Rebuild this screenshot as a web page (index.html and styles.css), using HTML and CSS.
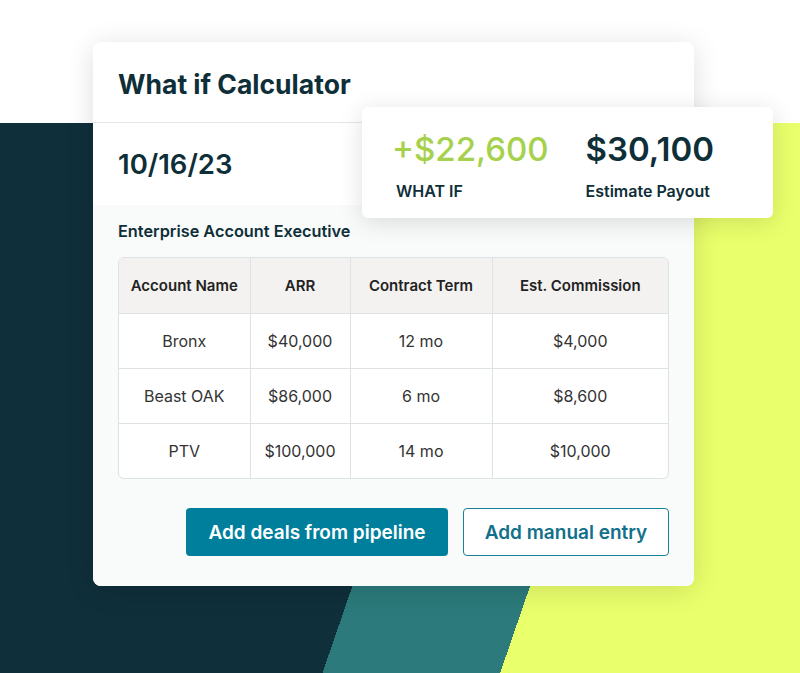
FILE: index.html
```html
<!DOCTYPE html>
<html lang="en">
<head>
    <meta charset="UTF-8">
    <meta name="viewport" content="width=device-width, initial-scale=1.0">
    <title>What if Calculator</title>
    <link rel="stylesheet" href="styles.css">
</head>
<body>

    <div class="scene">
        <div class="card">
            <div class="card-head">What if Calculator</div>
            <div class="card-date">10/16/23</div>
            <div class="card-body">
                <div class="role">Enterprise Account Executive</div>
                <div class="table-wrap">
                    <table class="deals">
                        <thead>
                            <tr>
                                <th class="c-name">Account Name</th>
                                <th class="c-arr">ARR</th>
                                <th class="c-term">Contract Term</th>
                                <th class="c-comm">Est. Commission</th>
                            </tr>
                        </thead>
                        <tbody>
                            <tr><td>Bronx</td><td>$40,000</td><td>12 mo</td><td>$4,000</td></tr>
                            <tr><td>Beast OAK</td><td>$86,000</td><td>6 mo</td><td>$8,600</td></tr>
                            <tr><td>PTV</td><td>$100,000</td><td>14 mo</td><td>$10,000</td></tr>
                        </tbody>
                    </table>
                </div>
                <div class="actions">
                    <button class="btn btn-fill">Add deals from pipeline</button>
                    <button class="btn btn-line">Add manual entry</button>
                </div>
            </div>

            <div class="payout">
                <div class="stat">
                    <div class="stat-value plus">+$22,600</div>
                    <div class="stat-label">WHAT IF</div>
                </div>
                <div class="stat">
                    <div class="stat-value">$30,100</div>
                    <div class="stat-label">Estimate Payout</div>
                </div>
            </div>
        </div>
    </div>

</body>
</html>
```

FILE: styles.css
```css
* { box-sizing: border-box; margin: 0; padding: 0; font-family: Inter, "Noto Sans", sans-serif; }
body { background: #fff; color: #0e2e38; }

.scene {
    width: 800px;
    height: 673px;
    overflow: hidden;
    padding: 42px 0 0 93px;
    background:
        linear-gradient(#fff, #fff) top left / 100% 123px no-repeat,
        linear-gradient(109deg, #0f2f3b 524px, #2c7a7b 524px, #2c7a7b 692px, #e9ff6b 692px);
}

.card { position: relative; width: 601px; background: #fff; border-radius: 8px; box-shadow: 0 4px 28px rgba(0, 0, 0, 0.13); }
.card-head { height: 81px; padding: 4px 25px 0; display: flex; align-items: center; border-bottom: 1px solid #e4e6e8; font-size: 26.5px; font-weight: 700; }
.card-date { height: 82px; padding: 0 25px; display: flex; align-items: center; font-size: 27.5px; font-weight: 600; }
.card-body { background: #f9fafa; padding: 16px 25px 30px; border-radius: 0 0 8px 8px; }
.role { font-size: 16.3px; font-weight: 600; line-height: 20px; margin-bottom: 16px; }

.table-wrap { border: 1px solid #dde2e5; border-radius: 6px; overflow: hidden; background: #fff; }
.deals { width: 100%; border-collapse: collapse; text-align: center; }
.deals th { background: #f4f2f0; height: 55px; font-size: 15px; font-weight: 600; color: #222; }
.deals td { height: 55px; font-size: 16px; color: #333; border-top: 1px solid #dde2e5; }
.deals th + th, .deals td + td { border-left: 1px solid #dde2e5; }
.c-name { width: 131px; }
.c-arr { width: 100px; }
.c-term { width: 142px; }

.actions { display: flex; justify-content: flex-end; gap: 15px; margin-top: 29px; }
.btn { height: 48px; border-radius: 4px; font-size: 19px; font-weight: 600; cursor: pointer; font-family: Inter, sans-serif; }
.btn-fill { width: 262px; background: #007f9c; color: #fff; border: none; }
.btn-line { width: 206px; background: #fff; color: #12708b; border: 1px solid #1a7f99; }

.payout { position: absolute; top: 65px; left: 269px; width: 411px; height: 111px; background: #fff; border-radius: 6px; box-shadow: 0 4px 24px rgba(0, 0, 0, 0.13); display: flex; padding: 22px 0 0 30px; gap: 37px; }
.stat-value { font-size: 33px; font-weight: 600; line-height: 40px; }
.stat-value.plus { color: #a5d14c; font-weight: 500; }
.stat-label { font-size: 16px; font-weight: 600; margin-top: 12px; padding-left: 4px; }
.stat + .stat .stat-label { padding-left: 0; }
```
